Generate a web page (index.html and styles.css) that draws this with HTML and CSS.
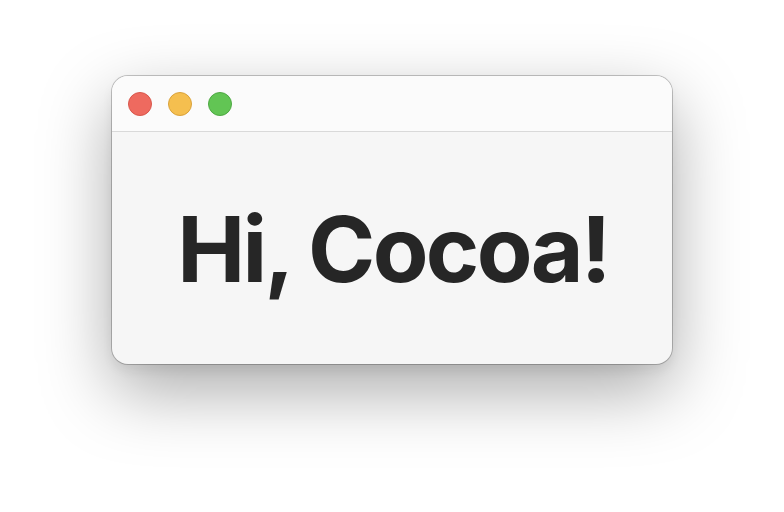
FILE: index.html
```html
<!DOCTYPE html>
<html>
<head>
<meta charset="utf-8">
<link rel="stylesheet" href="styles.css">
</head>
<body>
<div class="stage">
  <div class="window">
    <div class="titlebar">
      <span class="light red"></span>
      <span class="light yellow"></span>
      <span class="light green"></span>
    </div>
    <div class="content">
      <h1 class="greeting">Hi, Cocoa!</h1>
    </div>
  </div>
</div>
</body>
</html>
```
FILE: styles.css
```css
html, body {
  margin: 0;
  padding: 0;
  background: #ffffff;
  width: 784px;
  height: 512px;
  overflow: hidden;
}
.stage {
  padding: 76px 0 0 112px;
}
.window {
  width: 560px;
  height: 288px;
  border-radius: 16px;
  overflow: hidden;
  background: #f6f6f6;
  box-shadow: 0 0 0 1px rgba(0,0,0,0.22), 0 26px 70px rgba(0,0,0,0.34), 0 6px 12px rgba(0,0,0,0.06);
  display: flex;
  flex-direction: column;
}
.titlebar {
  height: 56px;
  background: #fbfbfb;
  border-bottom: 1px solid #d9d9d9;
  display: flex;
  align-items: center;
  gap: 16px;
  padding-left: 16px;
  box-sizing: border-box;
}
.light {
  width: 24px;
  height: 24px;
  border-radius: 50%;
  box-sizing: border-box;
}
.red { background: #ee6a5f; border: 1px solid #d8574c; }
.yellow { background: #f5bf4f; border: 1px solid #d9a23b; }
.green { background: #62c554; border: 1px solid #4ea843; }
.content {
  flex: 1;
  display: flex;
  align-items: center;
  justify-content: center;
}
.greeting {
  margin: 0;
  font-family: "Inter", "Liberation Sans", sans-serif;
  font-weight: 700;
  font-size: 91px;
  letter-spacing: -2.7px;
  color: #262626;
  line-height: 1;
  padding-top: 2px;
  padding-left: 2px;
}
```
